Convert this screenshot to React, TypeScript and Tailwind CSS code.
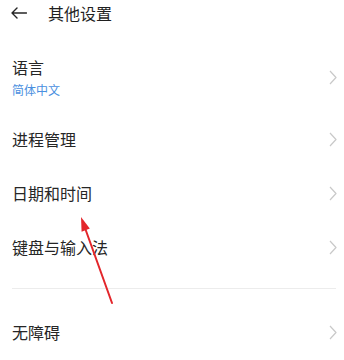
const font = { fontFamily: '"Noto Sans CJK SC", "Noto Sans", sans-serif' };

function Chevron() {
  return (
    <svg width="8" height="15" viewBox="0 0 8 15" className="shrink-0">
      <polyline points="1,1 7,7.5 1,14" fill="none" stroke="#c9c9c9" strokeWidth="1.2" strokeLinejoin="round" />
    </svg>
  );
}

function Row({ title, sub, tall }: { title: string; sub?: string; tall?: boolean }) {
  return (
    <div className={`flex items-center justify-between pl-3 pr-[7px] ${tall ? 'h-[70px]' : 'h-[54px]'}`}>
      <div className="flex flex-col gap-[4px]">
        <span className="text-[16px] leading-[22px] text-[#262626]">{title}</span>
        {sub && <span className="text-[12px] leading-[16px] text-[#4a8fe0]">{sub}</span>}
      </div>
      <Chevron />
    </div>
  );
}

export default function App() {
  return (
    <div className="relative w-[344px] h-[360px] bg-white overflow-hidden" style={font}>
      <div className="flex items-center h-[26px] pl-[11px] gap-[21px]">
        <svg width="16" height="12" viewBox="0 0 16 12">
          <path d="M15.5 6H1M6 1L1 6l5 5" fill="none" stroke="#262626" strokeWidth="1.4" strokeLinecap="round" strokeLinejoin="round" />
        </svg>
        <span className="text-[16px] text-[#1f1f1f]">其他设置</span>
      </div>

      <div className="pt-[16px]">
        <Row title="语言" sub="简体中文" tall />
        <Row title="进程管理" />
        <Row title="日期和时间" />
        <Row title="键盘与输入法" />
        <div className="mt-[14px] ml-3 mr-2 h-px bg-[#ececec]" />
        <div className="mt-[16px]">
          <Row title="无障碍" />
        </div>
      </div>

      {/* red annotation arrow */}
      <svg className="absolute inset-0 pointer-events-none" width="344" height="360" viewBox="0 0 344 360">
        <line x1="112" y1="303" x2="85" y2="228" stroke="#e3262b" strokeWidth="2" strokeLinecap="round" />
        <polygon points="81,217 89.8,228.6 81.6,231.8" fill="#e3262b" />
      </svg>
    </div>
  );
}
